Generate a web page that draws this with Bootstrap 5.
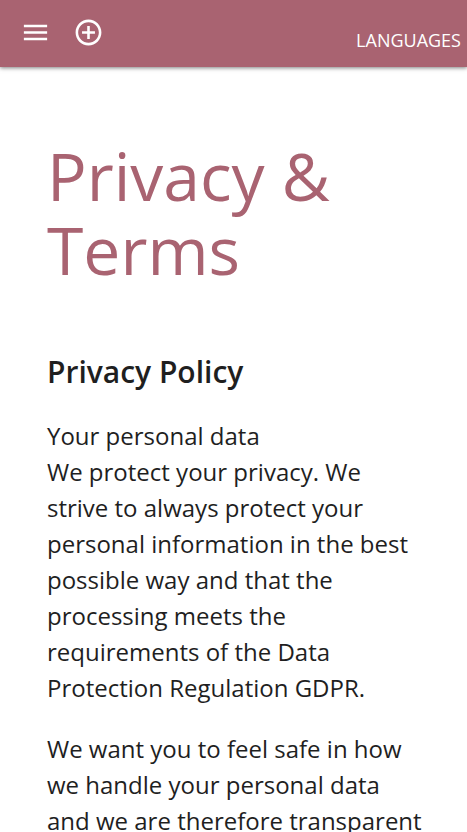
<!DOCTYPE html>
<html lang="en">
<head>
<meta charset="utf-8">
<meta name="viewport" content="width=device-width, initial-scale=1">
<title>Privacy &amp; Terms</title>
<link href="https://cdn.jsdelivr.net/npm/bootstrap@5.3.0/dist/css/bootstrap.min.css" rel="stylesheet">
<style>
:root { --brand: #a96371; }
html { scrollbar-width: none; }
body { font-family: "Open Sans", sans-serif; color: #1f1f1f; background: #fff; }
.topbar { background: var(--brand); height: 67px; box-shadow: 0 1px 4px rgba(0,0,0,.5); z-index: 2; }
.bar-tools { gap: 17px; padding: 14px 0 0 17px; }
.bar-btn { width: 36px; height: 36px; color: #fff; line-height: 1; }
.bar-btn svg { display: block; margin: auto; }
.lang-link { font-size: 18px; line-height: 24px; color: #fff; margin: 0 6px 15px 0; }
.page-body { padding: 71px 40px 40px 47px; }
.page-title { color: var(--brand); font-size: 66px; line-height: 74px; font-weight: 400; margin-bottom: 68px; }
.section-title { font-size: 30px; line-height: 36px; font-weight: 600; margin-bottom: 28px; }
.policy-text { font-size: 24px; line-height: 36px; margin-bottom: 25px; }
</style>
</head>
<body>
<header class="topbar sticky-top">
<nav class="d-flex h-100 justify-content-between" aria-label="Main">
<div class="bar-tools d-flex">
<button type="button" class="bar-btn btn p-0 border-0" aria-label="Menu"><svg width="31" height="31" viewBox="0 0 24 24" fill="currentColor"><path d="M3 18h18v-2H3v2zm0-5h18v-2H3v2zm0-7v2h18V6H3z"/></svg></button>
<button type="button" class="bar-btn btn p-0 border-0" aria-label="Add"><svg width="31" height="31" viewBox="0 0 24 24" fill="currentColor"><path d="M13 7h-2v4H7v2h4v4h2v-4h4v-2h-4V7zm-1-5C6.48 2 2 6.48 2 12s4.480 10 10 10 10-4.480 10-10S17.520 2 12 2zm0 18c-4.410 0-8-3.590-8-8s3.590-8 8-8 8 3.590 8 8-3.590 8-8 8z"/></svg></button>
</div>
<a href="#languages" class="lang-link text-decoration-none align-self-end">LANGUAGES</a>
</nav>
</header>
<main class="page-body">
<h1 class="page-title">Privacy &amp; Terms</h1>
<h2 class="section-title">Privacy Policy</h2>
<p class="policy-text">Your personal data<br>We protect your privacy. We strive to always protect your personal information in the best possible way and that the processing meets the requirements of the Data Protection Regulation GDPR.</p>
<p class="policy-text">We want you to feel safe in how we handle your personal data and we are therefore transparent</p>
</main>
<script src="https://cdn.jsdelivr.net/npm/bootstrap@5.3.0/dist/js/bootstrap.bundle.min.js"></script>
</body>
</html>
